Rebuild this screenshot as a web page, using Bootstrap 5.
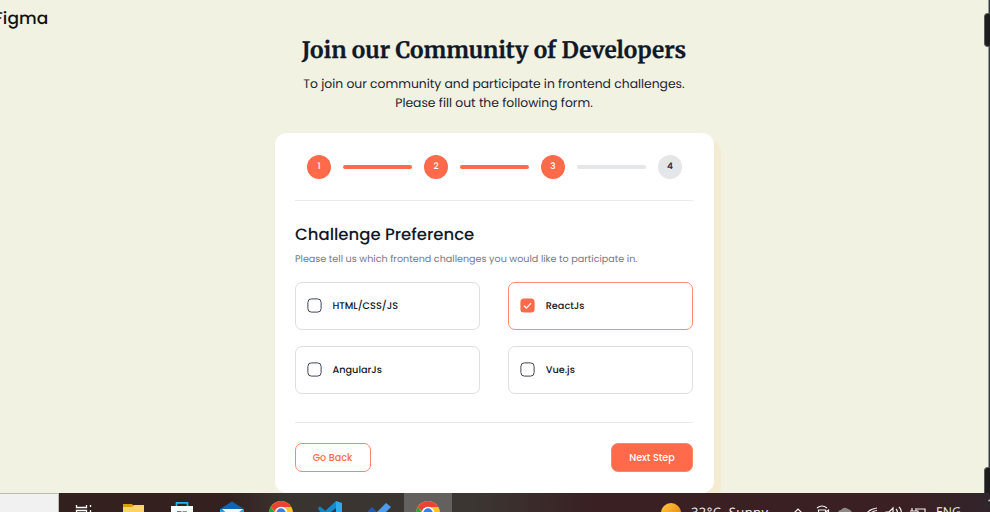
<!DOCTYPE html>
<html lang="en">
<head>
<meta charset="utf-8">
<meta name="viewport" content="width=device-width, initial-scale=1">
<title>Join our Community of Developers</title>
<link href="https://cdn.jsdelivr.net/npm/bootstrap@5.3.0/dist/css/bootstrap.min.css" rel="stylesheet">
<style>
:root{--accent:#ff6b4a;--ink:#111827;--muted:#737885}
body{background:#f1f2e2;color:var(--ink);font-family:Poppins,Inter,sans-serif;height:512px;white-space:nowrap;text-rendering:geometricPrecision}
.stage{height:493px}
.brand-line{height:36px;padding-top:5px;margin-left:-6px;font:500 17px/26px Poppins,Lato,sans-serif;color:#111;letter-spacing:.1px}
.page-title{font:700 22.6px/29px Merriweather,"DejaVu Serif",serif;padding-top:1px;-webkit-text-stroke:.25px var(--ink)}
.intro{font-size:12.35px;line-height:18.5px;margin-top:10px;color:#1c2432}
.heading-area{padding-right:2px}
.card-holder{padding-right:2px}
.form-card{width:439px;height:360px;border-radius:12px;padding:22px 20.5px 21px 20px;margin-top:20px;box-shadow:7px 7px 0 #f3ecd3}
.steps{padding:0 11.5px 0 12px;gap:12px;height:24px}
.step-dot{width:24px;height:24px;background:var(--accent);color:#fff;font-size:9px;font-weight:500;padding:2px 0 0 1px}
.step-dot.todo{background:#e5e6ea;color:#283040;font-weight:600}
.step-bar{height:4px;border-radius:2px;background:var(--accent)}
.step-bar.todo{background:#e5e6ea}
.rule{height:1px;background:#e9eaed}
.rule-top{margin-top:21px}
.sec-title{font-size:16.5px;line-height:24px;font-weight:500;margin-top:22px;padding-left:.5px}
.sec-note{font-size:9.6px;line-height:16px;margin-top:5px;padding-left:.5px;color:var(--muted)}
.choices{display:grid;grid-template-columns:1fr 1fr;gap:16px 28px;margin-top:14px}
.choice{height:48px;border:1px solid #dcdee3;border-radius:7px;padding-left:11px;gap:11px;font-size:9.7px;font-weight:500;color:#111827}
.choice span{padding-top:2px}
.choice.on{border-color:#ff8d73}
.choice svg{width:15px;height:15px;margin-top:-1px}
.actions{margin-top:20px}
.act{height:29px;border:1px solid #ff866b;border-radius:7px;font-size:9.6px;font-weight:500;padding:0;line-height:1}
.act-back{width:76px;color:var(--accent)}
.act-next{width:82px;background:var(--accent);color:#fff}
.side-edge{position:absolute;right:0;top:0;width:2px;height:493px;background:#303744;border-left:1px solid #999d99}
.side-tab{position:absolute;right:0;width:6px;background:#1d1d1e;border:1px solid #5a5b59;border-right:0;border-radius:4px 0 0 4px}
.tab-a{top:13px;height:34px}.tab-b{top:467px;height:26px;border-bottom:0;border-bottom-left-radius:0}
.taskbar{height:19px;background:linear-gradient(90deg,#32201f 0,#34201f 23%,#3a3431 29%,#3b3632 48%,#3a2023 60%,#3a2023 92%,#31252b 100%);color:#f5f2f2}
.search-end{width:59px;height:19px;background:#f1f1f1;border-top:1px solid #b9bdb3;border-right:1px solid #b9bdb3}
.app-slot{width:49.3px;height:19px}
.app-slot.on{background:#64605d;width:48px}
.app-slot svg{display:block;margin:0 auto}
.tray{font:13px/18px "Open Sans",sans-serif;height:19px}
.tray svg{display:block;flex:none}
.weather{width:77px;margin:10px 0 0 10px;white-space:pre;letter-spacing:.4px}
.lang{width:24px;margin-top:10px;font-size:12.2px}
.clock{width:3px;margin:1px 0 0 27px}
</style>
</head>
<body class="position-relative overflow-hidden m-0">
<main class="stage d-flex flex-column overflow-hidden position-relative">
  <header class="brand-line">Figma</header>
  <section class="heading-area text-center">
    <h1 class="page-title mb-0">Join our Community of Developers</h1>
    <p class="intro mb-0">To join our community and participate in frontend challenges.<br>Please fill out the following form.</p>
  </section>
  <div class="card-holder w-100 d-flex justify-content-center">
    <form class="form-card bg-white d-flex flex-column">
      <div class="steps d-flex align-items-center">
        <span class="step-dot rounded-circle d-flex align-items-center justify-content-center flex-shrink-0">1</span>
        <span class="step-bar flex-fill"></span>
        <span class="step-dot rounded-circle d-flex align-items-center justify-content-center flex-shrink-0">2</span>
        <span class="step-bar flex-fill"></span>
        <span class="step-dot rounded-circle d-flex align-items-center justify-content-center flex-shrink-0">3</span>
        <span class="step-bar todo flex-fill"></span>
        <span class="step-dot todo rounded-circle d-flex align-items-center justify-content-center flex-shrink-0">4</span>
      </div>
      <div class="rule rule-top"></div>
      <h2 class="sec-title mb-0">Challenge Preference</h2>
      <p class="sec-note mb-0">Please tell us which frontend challenges you would like to participate in.</p>
      <div class="choices">
        <label class="choice d-flex align-items-center"><svg viewBox="0 0 15 15"><rect x=".9" y=".9" width="13.2" height="13.2" rx="3.5" fill="#fff" stroke="#3f4654"/></svg><span>HTML/CSS/JS</span></label>
        <label class="choice on d-flex align-items-center"><svg viewBox="0 0 15 15"><rect x=".4" y=".4" width="14.2" height="14.2" rx="3.6" fill="#ff6b4a"/><path d="M4 7.8 6.4 10.1 11.1 5.2" fill="none" stroke="#fff" stroke-width="1.2"/></svg><span>ReactJs</span></label>
        <label class="choice d-flex align-items-center"><svg viewBox="0 0 15 15"><rect x=".9" y=".9" width="13.2" height="13.2" rx="3.5" fill="#fff" stroke="#3f4654"/></svg><span>AngularJs</span></label>
        <label class="choice d-flex align-items-center"><svg viewBox="0 0 15 15"><rect x=".9" y=".9" width="13.2" height="13.2" rx="3.5" fill="#fff" stroke="#3f4654"/></svg><span>Vue.js</span></label>
      </div>
      <div class="rule mt-auto"></div>
      <div class="actions d-flex justify-content-between">
        <button type="button" class="btn act act-back">Go Back</button>
        <button type="button" class="btn act act-next">Next Step</button>
      </div>
    </form>
  </div>
  <div class="side-edge"></div>
  <div class="side-tab tab-a"></div>
  <div class="side-tab tab-b"></div>
</main>
<footer class="taskbar d-flex overflow-hidden">
  <div class="search-end flex-shrink-0"></div>
  <div class="app-slot flex-shrink-0"><svg width="18" height="19" viewBox="0 0 18 19"><path d="M1.5 12v2.5h10V12M1.5 20v-2.5h10V20M15.5 12v2M15.5 17v3" fill="none" stroke="#fff" stroke-width="1.3"/></svg></div>
  <div class="app-slot flex-shrink-0"><svg width="22" height="19" viewBox="-1 0 22 19"><path d="M0 11h9l2 2-2 2H0z" fill="#e09b08"/><path d="M0 14h9l2-2h11v7H0z" fill="#ffd567"/></svg></div>
  <div class="app-slot flex-shrink-0"><svg width="24" height="19" viewBox="0 0 24 19"><path d="M6.5 14V9.8h11V14" fill="none" stroke="#27b4ee" stroke-width="1.7"/><path d="M1 13h22v6H1z" fill="#fff"/><path d="M7 18h4.5v1H7z" fill="#e6502a"/><path d="M12.5 18H17v1h-4.5z" fill="#73b62a"/></svg></div>
  <div class="app-slot flex-shrink-0"><svg width="24" height="19" viewBox="0 0 24 19"><path d="M0 16 12 8.5 24 16v3H0z" fill="#0f64b5"/><path d="M2 16h21l-3 3H5z" fill="#f4f8fb"/><path d="M0 16l5 3H0zM24 16l-5 3h5z" fill="#23a7e8"/></svg></div>
  <div class="app-slot flex-shrink-0"><svg width="24" height="19" viewBox="0 0 24 19"><circle cx="12" cy="20" r="12" fill="#ffc52c"/><path d="M1.7 14A12 12 0 0 1 22.4 14H12a6 6 0 0 0-5.4 5z" fill="#e94335"/><path d="M1.7 14 6.5 20H0a12 12 0 0 1 1.7-6z" fill="#27a04d"/><circle cx="12" cy="20" r="6.2" fill="#fff"/><circle cx="12" cy="20" r="4.7" fill="#397fe8"/></svg></div>
  <div class="app-slot flex-shrink-0"><svg width="24" height="19" viewBox="0 0 24 19"><path d="M18 8l6 2v9h-6z" fill="#2daaf0"/><path d="M18 8 6 19h7l5-4z" fill="#118bd1"/><path d="M0 15l2-1.5L9 19H2z" fill="#1184c6"/></svg></div>
  <div class="app-slot flex-shrink-0"><svg width="24" height="19" viewBox="0 0 24 19"><path d="M1 18l4-4 5 5H1z" fill="#2357ad"/><path d="M10 19l9-9 5 4-5 5z" fill="#4d9ceb"/></svg></div>
  <div class="app-slot on flex-shrink-0"><svg width="24" height="19" viewBox="0 0 24 19"><circle cx="12" cy="20" r="12" fill="#ffc52c"/><path d="M1.7 14A12 12 0 0 1 22.4 14H12a6 6 0 0 0-5.4 5z" fill="#e94335"/><path d="M1.7 14 6.5 20H0a12 12 0 0 1 1.7-6z" fill="#27a04d"/><circle cx="12" cy="20" r="6.2" fill="#fff"/><circle cx="12" cy="20" r="4.7" fill="#397fe8"/></svg></div>
  <div class="tray d-flex flex-shrink-0 ms-auto">
    <svg width="20" height="19" viewBox="0 0 20 19"><defs><linearGradient id="sun" x2="1" y2="1"><stop stop-color="#ffcb3d"/><stop offset="1" stop-color="#e6780f"/></linearGradient></defs><circle cx="10" cy="20" r="10" fill="url(#sun)"/></svg>
    <span class="weather">32°C  Sunny</span>
    <svg width="168" height="19" viewBox="768 0 168 19" fill="none" stroke="#f5f2f2" stroke-width="1.2"><path d="M794 20l4-4 4 4"/><path d="M817 15q5-4 10 0M818.5 20v-3h7v3M825.5 19l3-2v3"/><path d="M838 20q0-3 3-3 3-4 7-1 4 1 4 4z" fill="#8f8889" stroke="none"/><path d="M867 20q3-4 10-5M871 20q2-2 6-2.5"/><path d="M886 20v-1h3l4-4v5M896 16q2 2 1 4M899 14q3 3 2 6"/><path d="M912 15v3M916 15v3M910 18h8v2M917 16h8v4"/></svg>
    <span class="lang">ENG</span>
    <span class="clock">1</span>
  </div>
</footer>
<script src="https://cdn.jsdelivr.net/npm/bootstrap@5.3.0/dist/js/bootstrap.bundle.min.js"></script>
</body>
</html>
